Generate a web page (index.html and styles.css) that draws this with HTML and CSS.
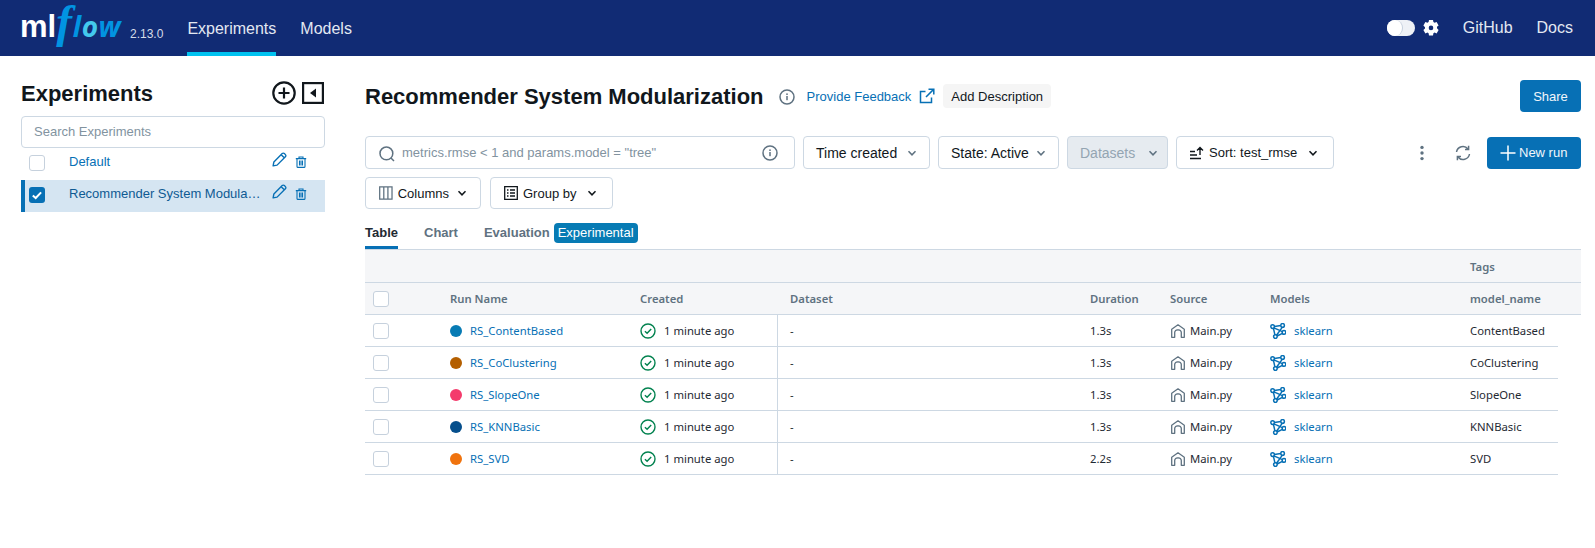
FILE: index.html
```html
<!DOCTYPE html>
<html lang="en">
<head>
  <meta charset="UTF-8">
  <title>MLflow</title>
  <link rel="stylesheet" href="styles.css">
</head>
<body>
  <svg class="defs" width="0" height="0">
    <symbol id="i-info" viewBox="0 0 16 16"><circle cx="8" cy="8" r="7" fill="none" stroke="currentColor" stroke-width="1.5"/><rect x="7.25" y="7" width="1.5" height="4.2" fill="currentColor"/><rect x="7.25" y="4.4" width="1.5" height="1.6" fill="currentColor"/></symbol>
    <symbol id="i-chev" viewBox="0 0 12 12"><path d="M2.5 4.2 6 7.8l3.5-3.6" fill="none" stroke="currentColor" stroke-width="1.5"/></symbol>
    <symbol id="i-pencil" viewBox="0 0 16 16"><path d="M1.2 14.8 2 10.6 10.9 1.7a1.6 1.6 0 0 1 2.3 0l1.1 1.1a1.6 1.6 0 0 1 0 2.3L5.4 14zM9.8 2.9l3.3 3.3" fill="none" stroke="currentColor" stroke-width="1.5" stroke-linejoin="round"/></symbol>
    <symbol id="i-trash" viewBox="0 0 12 12"><path d="M.8 2.6h10.4M4 2.4V1h4v1.4M2 2.8v7.6a1 1 0 0 0 1 1h6a1 1 0 0 0 1-1V2.8M4.5 4.6v4.8M6 4.6v4.8M7.5 4.6v4.8" fill="none" stroke="currentColor" stroke-width="1.1"/></symbol>
    <symbol id="i-check" viewBox="0 0 16 16"><circle cx="8" cy="8" r="7" fill="none" stroke="currentColor" stroke-width="1.4"/><path d="M4.9 8.2 7.1 10.3 11.2 6" fill="none" stroke="currentColor" stroke-width="1.4"/></symbol>
    <symbol id="i-house" viewBox="0 0 14 14"><path d="M.7 13.3V5.2L7 .8l6.3 4.4v8.1h-3V8.6A2.6 2.6 0 0 0 7 6a2.6 2.6 0 0 0-3.3 2.6v4.7z" fill="none" stroke="currentColor" stroke-width="1.3" stroke-linejoin="round"/></symbol>
    <symbol id="i-model" viewBox="0 0 16 16"><g fill="none" stroke="currentColor" stroke-width="1.5"><circle cx="2.6" cy="3.6" r="1.8"/><circle cx="12.6" cy="2.4" r="1.8"/><circle cx="14" cy="9.4" r="1.8"/><circle cx="5.4" cy="13.6" r="1.8"/><path d="M4.4 3.4 10.8 2.6M3.4 5.2 4.9 11.8M3.9 4.9 12.4 8.6M12.4 4.1 6.5 12.2M12.4 10.3 7.1 13"/></g></symbol>
  </svg>

  <header class="topbar">
    <div class="logo"><span class="logo-ml">ml</span><span class="logo-f">f</span><span class="logo-low">l<span class="logo-o">o</span>w</span></div>
    <span class="version">2.13.0</span>
    <nav class="topnav">
      <a class="active">Experiments</a>
      <a>Models</a>
    </nav>
    <div class="topright">
      <span class="toggle"><span class="knob"></span></span>
      <svg class="gear" viewBox="0 0 16 16" width="16" height="16"><path fill="#fff" fill-rule="evenodd" d="M6 0h4l.4 2.1 1.2.7 2-.8 2 3.4-1.6 1.4v1.4L15.6 10l-2 3.4-2-.8-1.2.7L10 15.6H6l-.4-2.3-1.2-.7-2 .8-2-3.4L2 8.6V7.2L.4 5.4l2-3.4 2 .8 1.2-.7zM8 5.6a2.3 2.3 0 1 0 0 4.6 2.3 2.3 0 0 0 0-4.6z"/></svg>
      <a class="github">GitHub</a>
      <a>Docs</a>
    </div>
  </header>

  <div class="page">
    <aside class="sidebar">
      <div class="side-head">
        <h2>Experiments</h2>
        <svg class="side-icon" viewBox="0 0 24 24" width="24" height="24"><circle cx="12" cy="12" r="10.7" fill="none" stroke="#11171c" stroke-width="2.2"/><path d="M12 6.5v11M6.5 12h11" stroke="#11171c" stroke-width="2.2"/></svg>
        <svg class="side-icon" viewBox="0 0 22 22" width="22" height="22"><rect x="1.1" y="1.1" width="19.8" height="19.8" fill="none" stroke="#11171c" stroke-width="2.2"/><path d="M14 6.5v9L8 11z" fill="#11171c"/></svg>
      </div>
      <input class="side-search" type="text" placeholder="Search Experiments">
      <ul class="exp-list">
        <li class="exp">
          <span class="box"></span>
          <a class="exp-name">Default</a>
          <svg class="pencil"><use href="#i-pencil"/></svg>
          <svg class="trash"><use href="#i-trash"/></svg>
        </li>
        <li class="exp selected">
          <span class="box checked"><svg viewBox="0 0 16 16" width="16" height="16"><path d="M3.8 8.4 6.7 11l5.4-5.6" fill="none" stroke="#fff" stroke-width="2"/></svg></span>
          <a class="exp-name">Recommender System Modularization</a>
          <svg class="pencil"><use href="#i-pencil"/></svg>
          <svg class="trash"><use href="#i-trash"/></svg>
        </li>
      </ul>
    </aside>

    <main class="content">
      <div class="title-row">
        <h1>Recommender System Modularization</h1>
        <svg class="info-icon"><use href="#i-info"/></svg>
        <a class="feedback">Provide Feedback</a>
        <svg class="ext" viewBox="0 0 16 16" width="16" height="16"><path d="M12.5 9.5v5h-11v-11h5M9.5 1.2h5.3v5.3M14.6 1.4 7 9" fill="none" stroke="#0770b5" stroke-width="1.5"/></svg>
        <button class="add-desc">Add Description</button>
        <button class="primary share">Share</button>
      </div>

      <div class="filters">
        <div class="filter-search">
          <svg viewBox="0 0 16 16" width="16" height="16"><circle cx="7.4" cy="7.4" r="6.4" fill="none" stroke="#5f7281" stroke-width="1.5"/><path d="M12 12l3 3" stroke="#5f7281" stroke-width="1.5"/></svg>
          <span class="placeholder">metrics.rmse &lt; 1 and params.model = "tree"</span>
          <svg class="info-icon"><use href="#i-info"/></svg>
        </div>
        <button class="btn time">Time created <svg class="chev muted"><use href="#i-chev"/></svg></button>
        <button class="btn state">State: Active <svg class="chev muted"><use href="#i-chev"/></svg></button>
        <button class="btn disabled">Datasets <svg class="chev muted"><use href="#i-chev"/></svg></button>
        <button class="btn small sort">
          <svg viewBox="0 0 16 14" width="16" height="14"><path d="M1 5.5h5M1 9h7M1 12.5h11M11 9V1.5M8 4.4l3-3 3 3" fill="none" stroke="#11171c" stroke-width="1.4"/></svg>
          Sort: test_rmse <svg class="chev sort-chev"><use href="#i-chev"/></svg>
        </button>
        <div class="filter-actions">
          <svg class="kebab" viewBox="0 0 4 16" width="4" height="16"><circle cx="2" cy="2.4" r="1.7" fill="#5f7281"/><circle cx="2" cy="8" r="1.7" fill="#5f7281"/><circle cx="2" cy="13.6" r="1.7" fill="#5f7281"/></svg>
          <svg class="refresh" viewBox="0 0 16 16" width="16" height="16"><path d="M1.5 7A6.5 6.5 0 0 1 13 4M14.5 9A6.5 6.5 0 0 1 3 12M13.6 .8V4.4H10M2.4 15.2V11.6H6" fill="none" stroke="#5f7281" stroke-width="1.5"/></svg>
          <button class="primary newrun"><svg viewBox="0 0 16 16" width="16" height="16"><path d="M8 .5v15M.5 8h15" stroke="#fff" stroke-width="1.5"/></svg>New run</button>
        </div>
      </div>

      <div class="view-row">
        <button class="btn small columns">
          <svg viewBox="0 0 14 14" width="14" height="14"><path d="M.7.7h12.6v12.6H.7zM4.9.7v12.6M9.1.7v12.6" fill="none" stroke="#5f7281" stroke-width="1.3"/></svg>
          Columns <svg class="chev"><use href="#i-chev"/></svg>
        </button>
        <button class="btn small groupby">
          <svg viewBox="0 0 14 14" width="14" height="14"><path d="M.7.7h12.6v12.6H.7zM6 4h5M6 7h5M6 10h5M3 4h1.5M3 7h1.5M3 10h1.5" fill="none" stroke="#11171c" stroke-width="1.3"/></svg>
          Group by <svg class="chev"><use href="#i-chev"/></svg>
        </button>
      </div>

      <div class="tabs">
        <a class="tab active">Table</a>
        <a class="tab">Chart</a>
        <a class="tab eval">Evaluation</a>
        <span class="badge">Experimental</span>
      </div>

      <div class="grid">
        <div class="group-row"><span class="tags-head">Tags</span></div>
        <div class="head-row">
          <span class="cell"><span class="box"></span></span>
          <span class="cell">Run Name</span>
          <span class="cell">Created</span>
          <span class="cell dataset">Dataset</span>
          <span class="cell">Duration</span>
          <span class="cell">Source</span>
          <span class="cell">Models</span>
          <span class="cell">model_name</span>
        </div>
        <div class="row">
          <span class="cell"><span class="box"></span></span>
          <span class="cell"><i class="dot c1"></i><a>RS_ContentBased</a></span>
          <span class="cell created"><svg class="ok"><use href="#i-check"/></svg>1 minute ago</span>
          <span class="cell dataset">-</span>
          <span class="cell">1.3s</span>
          <span class="cell"><svg class="house"><use href="#i-house"/></svg>Main.py</span>
          <span class="cell"><svg class="model"><use href="#i-model"/></svg><a>sklearn</a></span>
          <span class="cell">ContentBased</span>
        </div>
        <div class="row">
          <span class="cell"><span class="box"></span></span>
          <span class="cell"><i class="dot c2"></i><a>RS_CoClustering</a></span>
          <span class="cell created"><svg class="ok"><use href="#i-check"/></svg>1 minute ago</span>
          <span class="cell dataset">-</span>
          <span class="cell">1.3s</span>
          <span class="cell"><svg class="house"><use href="#i-house"/></svg>Main.py</span>
          <span class="cell"><svg class="model"><use href="#i-model"/></svg><a>sklearn</a></span>
          <span class="cell">CoClustering</span>
        </div>
        <div class="row">
          <span class="cell"><span class="box"></span></span>
          <span class="cell"><i class="dot c3"></i><a>RS_SlopeOne</a></span>
          <span class="cell created"><svg class="ok"><use href="#i-check"/></svg>1 minute ago</span>
          <span class="cell dataset">-</span>
          <span class="cell">1.3s</span>
          <span class="cell"><svg class="house"><use href="#i-house"/></svg>Main.py</span>
          <span class="cell"><svg class="model"><use href="#i-model"/></svg><a>sklearn</a></span>
          <span class="cell">SlopeOne</span>
        </div>
        <div class="row">
          <span class="cell"><span class="box"></span></span>
          <span class="cell"><i class="dot c4"></i><a>RS_KNNBasic</a></span>
          <span class="cell created"><svg class="ok"><use href="#i-check"/></svg>1 minute ago</span>
          <span class="cell dataset">-</span>
          <span class="cell">1.3s</span>
          <span class="cell"><svg class="house"><use href="#i-house"/></svg>Main.py</span>
          <span class="cell"><svg class="model"><use href="#i-model"/></svg><a>sklearn</a></span>
          <span class="cell">KNNBasic</span>
        </div>
        <div class="row">
          <span class="cell"><span class="box"></span></span>
          <span class="cell"><i class="dot c5"></i><a>RS_SVD</a></span>
          <span class="cell created"><svg class="ok"><use href="#i-check"/></svg>1 minute ago</span>
          <span class="cell dataset">-</span>
          <span class="cell">2.2s</span>
          <span class="cell"><svg class="house"><use href="#i-house"/></svg>Main.py</span>
          <span class="cell"><svg class="model"><use href="#i-model"/></svg><a>sklearn</a></span>
          <span class="cell">SVD</span>
        </div>
      </div>
    </main>
  </div>
</body>
</html>
```

FILE: styles.css
```css
:root {
  --blue: #0770b5;
  --border: #cdd8e3;
  --ink: #11171c;
  --muted: #5f7281;
  --cols: 85px 190px 138px 312px 80px 100px 200px 88px;
}
*, *::before, *::after { box-sizing: border-box; }
body { margin: 0; font-family: "Liberation Sans", Arial, sans-serif; color: var(--ink); background: #fff; font-size: 13px; overflow: hidden; }
.defs { position: absolute; }
a { color: inherit; text-decoration: none; }
ul { list-style: none; margin: 0; padding: 0; }
button { font-family: inherit; }

/* top bar */
.topbar { display: flex; align-items: flex-start; height: 56px; background: #112b74; color: #e3e8f2; padding-left: 20px; }
.logo { width: 110px; height: 56px; display: flex; align-items: baseline; white-space: nowrap; }
.logo-ml { font-size: 31px; font-weight: 700; color: #fff; line-height: 53px; }
.logo-f { font-family: "Liberation Serif", serif; font-style: italic; font-weight: 700; font-size: 47px; color: #0194e2; margin: 0 1px 0 0; line-height: 42px; }
.logo-low { font-family: "Open Sans", sans-serif; font-style: italic; font-weight: 700; font-size: 28px; color: #0194e2; letter-spacing: 0.5px; line-height: 52px; }
.logo-o { color: #43c9ed; }
.version { font-size: 12px; margin-top: 27px; color: #d5dbe8; }
.topnav { display: flex; margin-left: 24px; gap: 24px; font-size: 16px; }
.topnav a { height: 56px; line-height: 57px; }
.topnav a.active { border-bottom: 4px solid #00c2f0; }
.topright { margin-left: auto; display: flex; align-items: center; height: 56px; font-size: 16px; padding-right: 22px; }
.toggle { width: 28px; height: 16px; border-radius: 8px; background: #eef1f6; display: block; }
.knob { display: block; width: 16px; height: 16px; border-radius: 8px; background: #fff; border-right: 1px solid #c5cfdc; }
.gear { margin-left: 8px; }
.github { margin: 0 24px 0 24px; }

.page { display: flex; }

/* sidebar */
.sidebar { width: 304px; margin: 0 40px 0 21px; padding-top: 23px; }
.side-head { display: flex; align-items: center; height: 28px; margin-bottom: 9px; }
.side-head h2 { margin: 2px auto 0 0; font-size: 22px; font-weight: 700; line-height: 28px; }
.side-icon { margin-right: 1px; }
.side-head .side-icon + .side-icon { margin: 0 1px 0 5px; }
.side-search { display: block; width: 100%; height: 32px; border: 1px solid var(--border); border-radius: 4px; padding: 0 12px 2px; font: 13px "Liberation Sans", sans-serif; outline: none; }
.side-search::placeholder { color: #82939f; opacity: 1; }
.exp { display: flex; align-items: center; height: 32px; padding-left: 8px; }
.exp.selected { background: #d5e5f2; border-left: 4px solid var(--blue); padding-left: 4px; }
.exp > .box { margin-bottom: 2px; }
.exp-name { width: 192px; margin: 0 0 6px 24px; color: var(--blue); white-space: nowrap; overflow: hidden; text-overflow: ellipsis; }
.selected .exp-name { color: #0e5a92; }
.pencil { width: 15px; height: 15px; margin: 0 0 9px 11px; color: var(--blue); }
.trash { width: 12px; height: 12px; margin: 0 0 5px 8px; color: var(--blue); }
.box { display: inline-block; width: 16px; height: 16px; border: 1px solid #c6d1dd; border-radius: 3px; background: #fff; flex: none; }
.box.checked { background: var(--blue); border: 0; }
.box.checked svg { display: block; }

/* main */
.content { width: 1216px; }
.title-row { display: flex; align-items: center; height: 32px; margin-top: 24px; }
.title-row h1 { margin: 1px 0 0; font-size: 22px; font-weight: 700; line-height: 32px; white-space: nowrap; }
.info-icon { width: 16px; height: 16px; color: var(--muted); flex: none; }
.title-row .info-icon { margin: 2px 12px 0 15px; }
.feedback { color: var(--blue); margin-right: 8px; }
.ext { margin-bottom: 1px; }
.add-desc { margin-left: 8px; height: 24px; padding: 0 8px; font-size: 13px; background: #f5f5f5; color: var(--ink); border: 0; border-radius: 4px; }
.primary { background: var(--blue); color: #f1f6fb; border: 0; border-radius: 4px; height: 32px; font-size: 13px; }
.share { margin-left: auto; width: 61px; }

.filters { display: flex; align-items: center; gap: 8px; margin-top: 24px; height: 33px; }
.filter-search { width: 430px; height: 33px; border: 1px solid var(--border); border-radius: 4px; display: flex; align-items: center; padding: 0 16px 0 13px; gap: 7px; }
.filter-search > svg:first-child { margin-top: 2px; }
.placeholder { color: #82939f; margin-right: auto; }
.btn { display: flex; align-items: center; height: 33px; border: 1px solid var(--border); border-radius: 4px; background: #fff; color: var(--ink); font-size: 14px; padding: 0 12px; white-space: nowrap; }
.chev { width: 12px; height: 12px; flex: none; }
.chev.muted { color: var(--muted); }
.time { width: 127px; gap: 9px; }
.state { width: 121px; gap: 6px; }
.disabled { width: 101px; gap: 12px; background: #e6ebf0; color: #94a5b2; }
.small { font-size: 13px; }
.sort { width: 158px; gap: 4px; }
.sort-chev { margin-left: 6px; }
.filter-actions { margin-left: auto; display: flex; align-items: center; }
.kebab { margin-right: 31px; }
.refresh { margin-right: 16px; }
.newrun { display: flex; align-items: center; gap: 3px; width: 94px; padding: 0 0 0 13px; }

.view-row { display: flex; gap: 9px; margin-top: 8px; height: 32px; }
.view-row .btn { height: 32px; gap: 5px; }
.columns { width: 116px; padding-left: 13px; }
.groupby { width: 123px; padding-left: 13px; }
.columns .chev { margin-left: 2px; }
.groupby .chev { margin-left: 5px; }

.tabs { display: flex; align-items: flex-start; height: 41px; border-bottom: 1px solid var(--border); padding-top: 12px; }
.tab { height: 28px; line-height: 24px; font-weight: 700; color: var(--muted); margin-right: 26px; }
.tab.active { color: #1f2a33; border-bottom: 3px solid var(--blue); }
.tab.eval { margin-right: 4px; }
.badge { background: #077bb4; color: #fff; border-radius: 4px; height: 20px; line-height: 20px; padding: 0 4px; margin-top: 2px; }

/* table */
.grid { font-family: "Noto Sans", sans-serif; font-size: 11.3px; color: #1f2a33; }
.group-row { height: 33px; background: #f5f6f8; border-bottom: 1px solid var(--border); padding-left: 1105px; display: flex; align-items: center; }
.tags-head, .head-row { color: var(--muted); font-weight: 600; }
.head-row, .row { display: grid; grid-template-columns: var(--cols); height: 32px; border-bottom: 1px solid var(--border); }
.head-row { background: #f5f6f8; }
.row { width: 1193px; }
.cell { display: flex; align-items: center; white-space: nowrap; }
.cell:first-child { padding-left: 8px; }
.row a { color: var(--blue); }
.created { border-right: 1px solid var(--border); }
.dataset { padding-left: 12px; }
.dot { width: 12px; height: 12px; border-radius: 50%; margin-right: 8px; }
.c1 { background: #077bb4; }
.c2 { background: #b45f00; }
.c3 { background: #f43b6c; }
.c4 { background: #064f8c; }
.c5 { background: #f0730e; }
.ok { width: 16px; height: 16px; color: #02824f; margin-right: 8px; }
.house { width: 14px; height: 14px; color: var(--muted); margin: 0 5px 0 1px; }
.model { width: 16px; height: 16px; color: var(--blue); margin-right: 8px; }
```
